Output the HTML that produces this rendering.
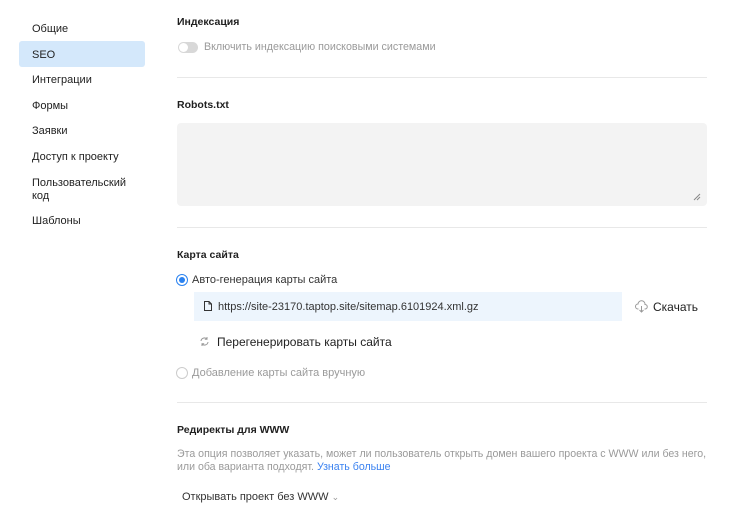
<!DOCTYPE html>
<html><head><meta charset="utf-8"><style>
body{margin:0;width:751px;height:526px;background:#fff;font-family:"Liberation Sans",sans-serif;color:#222;position:relative;overflow:hidden;font-size:11px}
.a{position:absolute;white-space:nowrap}
.nav{left:32px}
.h{font-weight:bold;font-size:10.5px;color:#1f1f1f}
.g{color:#9a9a9a}
.hr{position:absolute;left:177px;width:530px;height:1px;background:#e8e8e8}
</style></head><body>
<div class="a" style="left:19px;top:41px;width:126px;height:26px;background:#d4e8fb;border-radius:3px"></div>
<div class="a nav" style="top:23px">Общие</div>
<div class="a nav" style="top:49px">SEO</div>
<div class="a nav" style="top:74px">Интеграции</div>
<div class="a nav" style="top:100px">Формы</div>
<div class="a nav" style="top:125px">Заявки</div>
<div class="a nav" style="top:151px">Доступ к проекту</div>
<div class="a nav" style="top:177px;line-height:13px">Пользовательский<br>код</div>
<div class="a nav" style="top:215px">Шаблоны</div>

<div class="a h" style="left:177px;top:16px">Индексация</div>
<div class="a" style="left:178px;top:42px;width:20px;height:11px;border-radius:6px;background:#d8d8d8"></div>
<div class="a" style="left:179px;top:43px;width:9px;height:9px;border-radius:6px;background:#fff"></div>
<div class="a g" style="left:204px;top:41px;font-size:10.7px">Включить индексацию поисковыми системами</div>
<div class="hr" style="top:77px"></div>
<div class="a h" style="left:177px;top:99px">Robots.txt</div>
<div class="a" style="left:177px;top:123px;width:530px;height:83px;background:#f3f3f3;border-radius:4px"></div>
<svg class="a" style="left:693px;top:193px" width="8" height="8"><path d="M7 1L1 7M7 4L4 7" stroke="#888" stroke-width="1"/></svg>
<div class="hr" style="top:227px"></div>

<div class="a h" style="left:177px;top:249px">Карта сайта</div>
<div class="a" style="left:176px;top:274px;width:10px;height:10px;border-radius:50%;border:1px solid #2a82f0"></div>
<div class="a" style="left:179px;top:277px;width:6px;height:6px;border-radius:50%;background:#2a82f0"></div>
<div class="a" style="left:192px;top:274px;color:#333">Авто-генерация карты сайта</div>
<div class="a" style="left:194px;top:292px;width:428px;height:29px;background:#edf5fd"></div>
<svg class="a" style="left:203px;top:300px" width="10" height="12"><path d="M1.5 1.5h4.5l2.5 2.5v6.5h-7z M6 1.5v2.5h2.5" fill="none" stroke="#333" stroke-width="1"/></svg>
<div class="a" style="left:218px;top:301px;color:#333">https://site-23170.taptop.site/sitemap.6101924.xml.gz</div>
<svg class="a" style="left:635px;top:300px" width="13" height="13"><path d="M3.5 9H3a2.5 2.5 0 0 1 0-5 3.5 3.5 0 0 1 7 .5A2 2 0 0 1 10 9h-.5M6.5 6v6M4.5 10l2 2 2-2" fill="none" stroke="#999" stroke-width="1"/></svg>
<div class="a" style="left:653px;top:300px;font-size:12px;color:#222">Скачать</div>
<svg class="a" style="left:199px;top:336px" width="11" height="11"><path d="M2 5a3.5 3.5 0 0 1 6-2M9 6a3.5 3.5 0 0 1-6 2M8 1v2.2H5.8M3 10V7.8h2.2" fill="none" stroke="#999" stroke-width="1"/></svg>
<div class="a" style="left:217px;top:335px;font-size:12px;color:#222">Перегенерировать карты сайта</div>
<div class="a" style="left:176px;top:367px;width:10px;height:10px;border-radius:50%;border:1px solid #ccc"></div>
<div class="a g" style="left:192px;top:367px">Добавление карты сайта вручную</div>
<div class="hr" style="top:402px"></div>

<div class="a h" style="left:177px;top:424px">Редиректы для WWW</div>
<div class="a g" style="left:177px;top:448px;line-height:13px;font-size:10.6px">Эта опция позволяет указать, может ли пользователь открыть домен вашего проекта с WWW или без него,<br>или оба варианта подходят. <span style="color:#3b82f0">Узнать больше</span></div>
<div class="a" style="left:182px;top:491px;color:#333">Открывать проект без WWW <span style="color:#999;font-size:9px">⌄</span></div>
</body></html>
